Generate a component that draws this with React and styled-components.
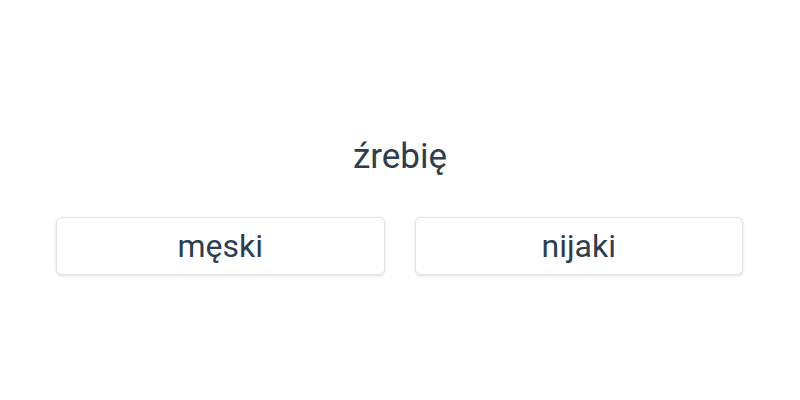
import React from "react";
import styled, { createGlobalStyle } from "styled-components";

const Global = createGlobalStyle`
  html, body { margin: 0; padding: 0; background: #fff; }
  body { font-family: Roboto, "Noto Sans", sans-serif; color: #2c3e50; }
`;

const Page = styled.div`
  width: 800px;
  height: 400px;
  box-sizing: border-box;
  padding-top: 136px;
  display: flex;
  flex-direction: column;
  align-items: center;
`;

const Word = styled.h1`
  margin: 0;
  font-size: 35px;
  font-weight: 400;
  line-height: 42px;
  color: #2c3e50;
`;

const Options = styled.div`
  margin-top: 39px;
  width: 100%;
  box-sizing: border-box;
  padding: 0 57px 0 56px;
  display: grid;
  grid-template-columns: 1fr 1fr;
  gap: 30px;
`;

const Option = styled.button`
  height: 58px;
  border: 1px solid #e4e4e4;
  border-radius: 6px;
  background: #fff;
  box-shadow: 0 1px 3px rgba(0, 0, 0, 0.14);
  font-family: Roboto, "Noto Sans", sans-serif;
  font-size: 32px;
  color: #2c3e50;
  cursor: pointer;
  padding: 0;
`;

export default function App() {
  return (
    <>
      <Global />
      <Page>
        <Word>źrebię</Word>
        <Options>
          <Option>męski</Option>
          <Option>nijaki</Option>
        </Options>
      </Page>
    </>
  );
}
